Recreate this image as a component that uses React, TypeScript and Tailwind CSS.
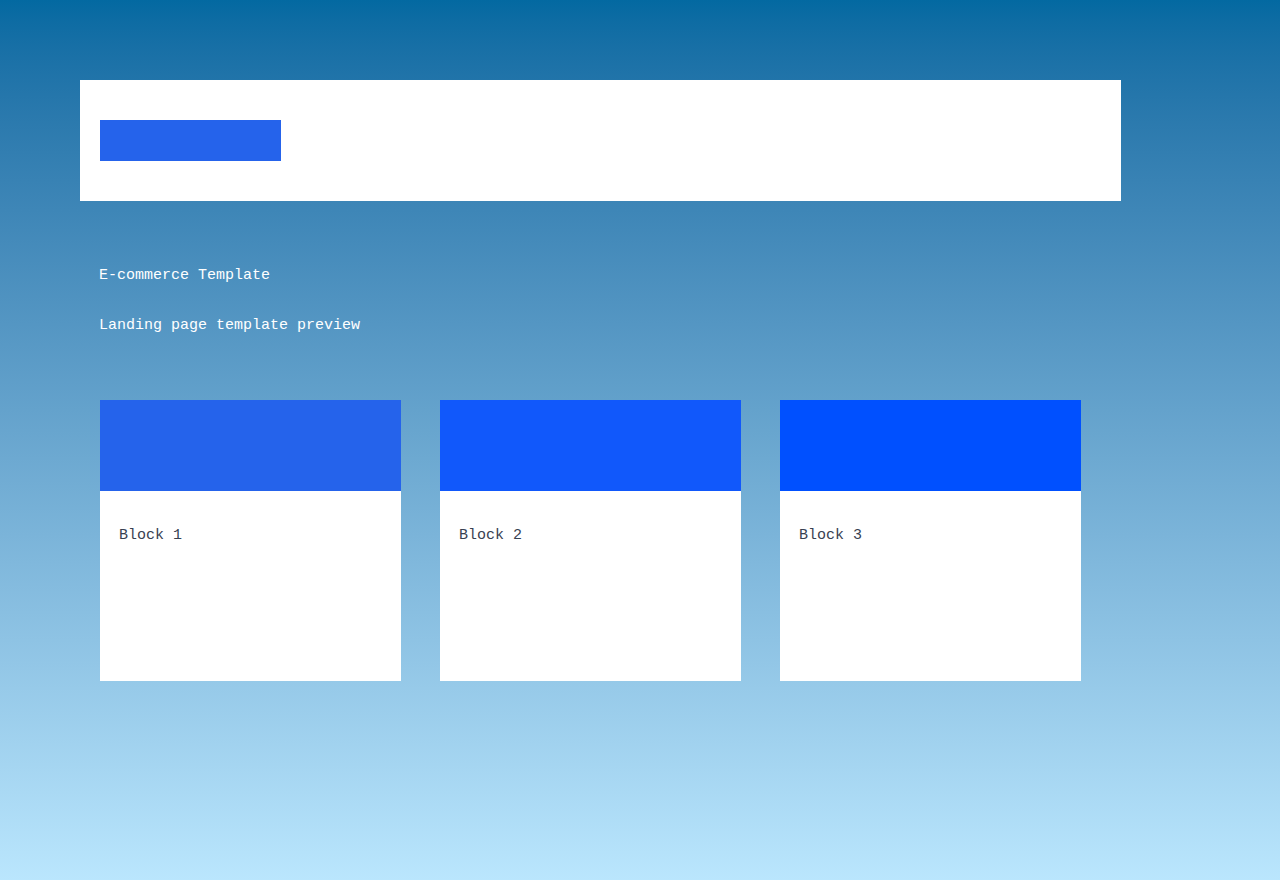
const blocks = [
  { label: "Block 1", tone: "bg-[#2563eb]" },
  { label: "Block 2", tone: "bg-[#1158fb]" },
  { label: "Block 3", tone: "bg-[#0050ff]" },
];

export default function App() {
  return (
    <div className="min-h-[880px] w-full bg-gradient-to-b from-[#0369a1] to-[#bae6fd] pt-20 pl-20 font-['Liberation_Mono',monospace] text-[15px]">
      <header className="flex h-[121px] w-[1041px] items-center bg-white px-5">
        <div className="h-[41px] w-[181px] bg-[#2563eb]" />
      </header>

      <section className="pl-5 pt-[65px]">
        <div className="-ml-px">
          <h1 className="leading-5 text-white">E-commerce Template</h1>
          <p className="mt-[30px] leading-5 text-white">Landing page template preview</p>
        </div>

        <div className="mt-[64px] flex gap-[39px]">
          {blocks.map((b) => (
            <div key={b.label} className="h-[281px] w-[301px] bg-white">
              <div className={`h-[91px] ${b.tone}`} />
              <div className="pl-[19px] pr-5 pt-[35px] leading-5 text-[#374151]">{b.label}</div>
            </div>
          ))}
        </div>
      </section>
    </div>
  );
}
